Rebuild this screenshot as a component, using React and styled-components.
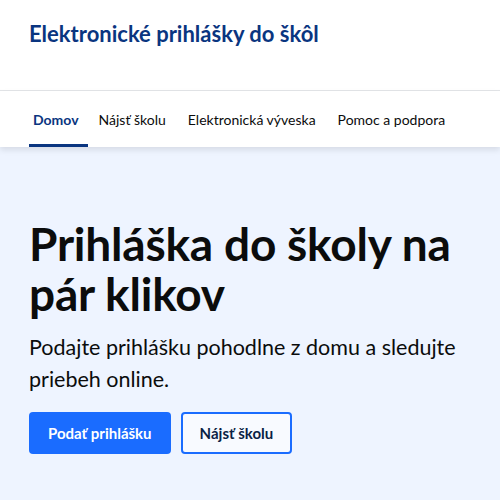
import React from "react";
import styled, { createGlobalStyle } from "styled-components";

const GlobalStyle = createGlobalStyle`
  html, body {
    margin: 0;
    padding: 0;
    background: #eef4ff;
  }
  body {
    font-family: Lato, "Noto Sans", Arial, sans-serif;
    color: #0b0c0c;
  }
`;

const navItems = ["Domov", "Nájsť školu", "Elektronická výveska", "Pomoc a podpora"];

export default function App() {
  return (
    <Page>
      <GlobalStyle />
      <TopBar>
        <SiteTitle>Elektronické prihlášky do škôl</SiteTitle>
      </TopBar>
      <Nav>
        {navItems.map((item, i) => (
          <NavLink key={item} $active={i === 0}>
            {item}
          </NavLink>
        ))}
      </Nav>
      <Hero>
        <Heading>Prihláška do školy na pár klikov</Heading>
        <Lead>Podajte prihlášku pohodlne z domu a sledujte priebeh online.</Lead>
        <Actions>
          <PrimaryButton>Podať prihlášku</PrimaryButton>
          <SecondaryButton>Nájsť školu</SecondaryButton>
        </Actions>
      </Hero>
    </Page>
  );
}

const Page = styled.div`
  width: 500px;
  min-height: 500px;
  background: #eef4ff;
`;

const TopBar = styled.header`
  height: 91px;
  background: #fff;
  border-bottom: 1px solid #e3e5e8;
  padding: 0 29px;
  box-sizing: border-box;
`;

const SiteTitle = styled.div`
  padding-top: 19px;
  font-size: 22px;
  line-height: 30px;
  font-weight: 700;
  color: #0a3580;
`;

const Nav = styled.nav`
  position: relative;
  z-index: 1;
  display: flex;
  gap: 14px;
  height: 56px;
  padding: 0 29px;
  background: #fff;
  box-shadow: 0 3px 6px rgba(0, 0, 0, 0.1);
`;

const NavLink = styled.a`
  display: flex;
  align-items: center;
  padding: 3px 4px 0;
  font-size: 14px;
  font-weight: ${(p) => (p.$active ? 700 : 400)};
  color: ${(p) => (p.$active ? "#0a3580" : "#0b0c0c")};
  border-bottom: 3px solid ${(p) => (p.$active ? "#0a3580" : "transparent")};
  box-sizing: border-box;

  &:first-child {
    padding-right: 9px;
    margin-right: -7px;
  }
`;

const Hero = styled.section`
  padding: 72px 29px 40px;
`;

const Heading = styled.h1`
  margin: 0;
  font-size: 46px;
  line-height: 50px;
  font-weight: 700;
  letter-spacing: -0.2px;
`;

const Lead = styled.p`
  margin: 12px 0 0;
  font-size: 21.5px;
  line-height: 32px;
`;

const Actions = styled.div`
  display: flex;
  gap: 10px;
  margin-top: 17px;
`;

const PrimaryButton = styled.button`
  height: 42px;
  padding: 0 19px;
  border: none;
  border-radius: 4px;
  background: #1a6cff;
  color: #fff;
  font-family: inherit;
  font-size: 15px;
  font-weight: 700;
`;

const SecondaryButton = styled.button`
  height: 42px;
  padding: 0 17px;
  border: 2px solid #1a6cff;
  border-radius: 4px;
  background: #f8faff;
  color: #0b1f45;
  font-family: inherit;
  font-size: 15px;
  font-weight: 700;
`;
